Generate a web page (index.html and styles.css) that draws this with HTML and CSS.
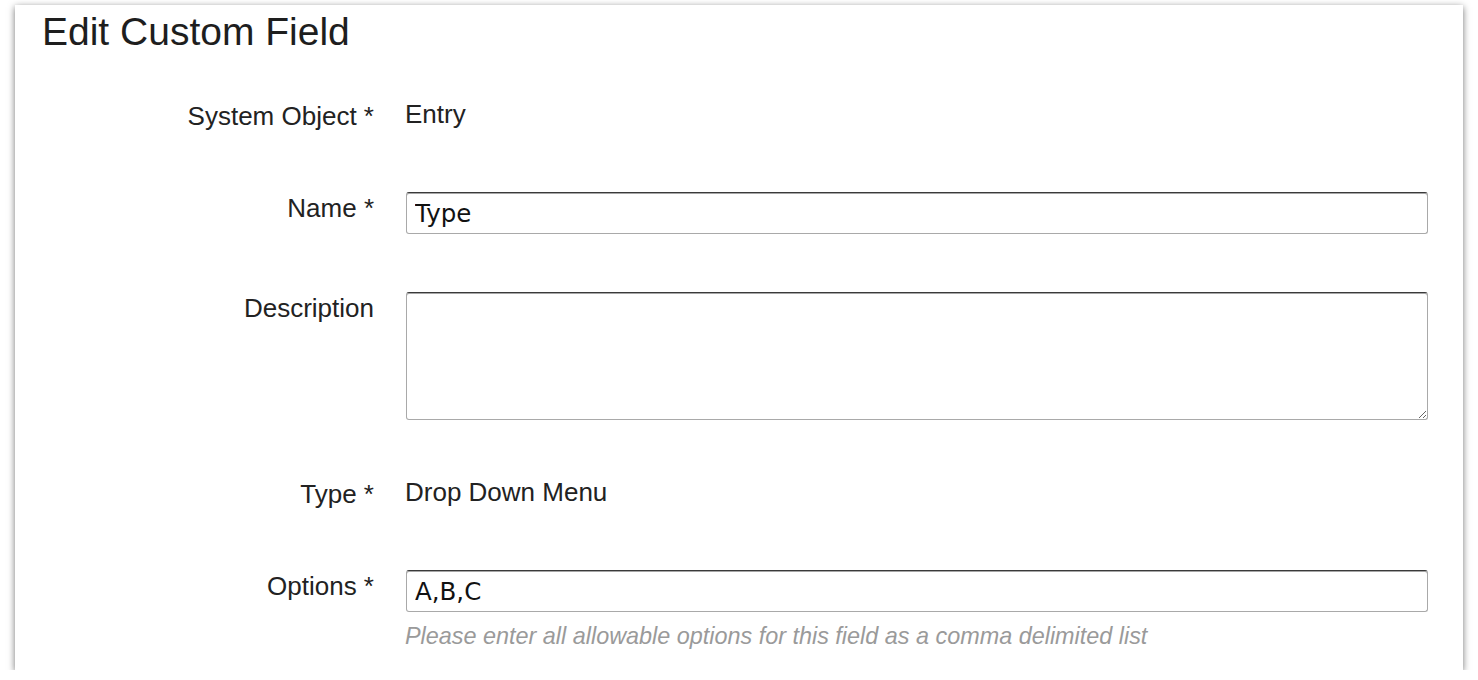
FILE: index.html
```html
<!DOCTYPE html>
<html lang="en">
<head>
<meta charset="utf-8">
<title>Edit Custom Field</title>
<link rel="stylesheet" href="styles.css">
</head>
<body>
<div class="card">
  <h1 class="title">Edit Custom Field</h1>
  <div class="row static first">
    <label class="label">System Object *</label>
    <div class="value">Entry</div>
  </div>
  <div class="row gap-input">
    <label class="label" for="name">Name *</label>
    <div class="control"><input id="name" class="input" type="text" value="Type"></div>
  </div>
  <div class="row gap-area">
    <label class="label" for="desc">Description</label>
    <div class="control"><textarea id="desc" class="input area"></textarea></div>
  </div>
  <div class="row static gap-static">
    <label class="label">Type *</label>
    <div class="value">Drop Down Menu</div>
  </div>
  <div class="row gap-input">
    <label class="label" for="opts">Options *</label>
    <div class="control">
      <input id="opts" class="input" type="text" value="A,B,C">
      <p class="help">Please enter all allowable options for this field as a comma delimited list</p>
    </div>
  </div>
</div>
</body>
</html>
```

FILE: styles.css
```css
html, body {
  margin: 0;
  padding: 0;
  background: #ffffff;
}

body {
  font-family: "Liberation Sans", Arial, sans-serif;
  color: #222222;
}

.card {
  margin: 5px 0 0 15px;
  width: 1448px;
  box-sizing: border-box;
  padding: 5px 35px 20px 0;
  background: #ffffff;
  box-shadow: 0 2px 7px rgba(0, 0, 0, 0.55);
}

.title {
  margin: 0;
  padding-left: 27px;
  font-size: 39px;
  line-height: 44px;
  font-weight: normal;
  color: #1e1e1e;
}

.row {
  display: grid;
  grid-template-columns: 359px 1fr;
  column-gap: 32px;
  align-items: start;
}

.first { margin-top: 45px; }
.gap-input { margin-top: 61px; }
.gap-area { margin-top: 58px; }
.gap-static { margin-top: 57px; }

.label {
  text-align: right;
  font-size: 26px;
  line-height: 30px;
  padding-top: 1px;
  color: #222222;
}

.static .label {
  padding-top: 2px;
}

.value {
  font-size: 26px;
  line-height: 30px;
  margin-left: -1px;
  color: #222222;
}

.control {
  display: flex;
  flex-direction: column;
}

.input {
  display: block;
  box-sizing: border-box;
  width: 100%;
  height: 42px;
  margin: 0;
  padding: 0 8px;
  border: 1px solid #a9a9a9;
  border-top-color: #3a3a3a;
  border-radius: 3px;
  box-shadow: inset 0 1px 0 rgba(0, 0, 0, 0.35);
  font-family: "DejaVu Sans", "Liberation Sans", sans-serif;
  font-size: 24.5px;
  color: #111111;
  background: #ffffff;
  outline: none;
}

.area {
  height: 128px;
  padding: 6px 8px;
  resize: vertical;
}

.help {
  margin: 10px 0 0 -1px;
  font-size: 23.4px;
  line-height: 28px;
  font-style: italic;
  color: #9a9a9a;
}
```
